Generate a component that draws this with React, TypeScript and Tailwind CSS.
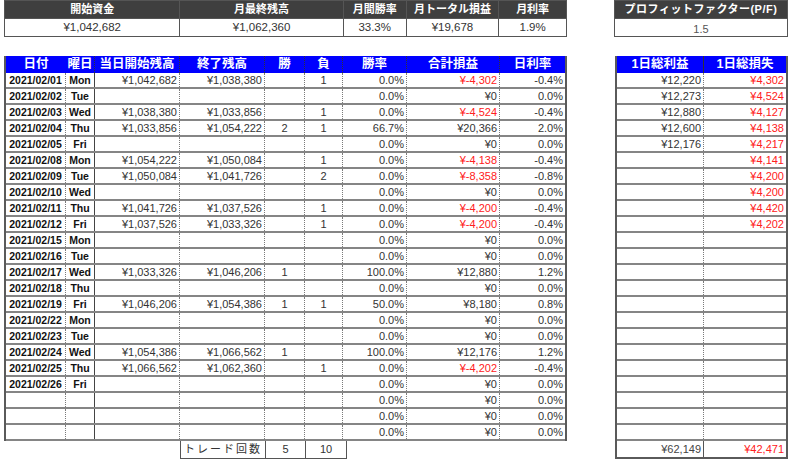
import React from "react";

type Row = {
  date?: string;
  day?: string;
  open?: string;
  close?: string;
  win?: string;
  lose?: string;
  rate: string;
  pl: string;
  neg?: boolean;
  pct: string;
};

const rows: Row[] = [
  { date: "2021/02/01", day: "Mon", open: "¥1,042,682", close: "¥1,038,380", lose: "1", rate: "0.0%", pl: "¥-4,302", neg: true, pct: "-0.4%" },
  { date: "2021/02/02", day: "Tue", rate: "0.0%", pl: "¥0", pct: "0.0%" },
  { date: "2021/02/03", day: "Wed", open: "¥1,038,380", close: "¥1,033,856", lose: "1", rate: "0.0%", pl: "¥-4,524", neg: true, pct: "-0.4%" },
  { date: "2021/02/04", day: "Thu", open: "¥1,033,856", close: "¥1,054,222", win: "2", lose: "1", rate: "66.7%", pl: "¥20,366", pct: "2.0%" },
  { date: "2021/02/05", day: "Fri", rate: "0.0%", pl: "¥0", pct: "0.0%" },
  { date: "2021/02/08", day: "Mon", open: "¥1,054,222", close: "¥1,050,084", lose: "1", rate: "0.0%", pl: "¥-4,138", neg: true, pct: "-0.4%" },
  { date: "2021/02/09", day: "Tue", open: "¥1,050,084", close: "¥1,041,726", lose: "2", rate: "0.0%", pl: "¥-8,358", neg: true, pct: "-0.8%" },
  { date: "2021/02/10", day: "Wed", rate: "0.0%", pl: "¥0", pct: "0.0%" },
  { date: "2021/02/11", day: "Thu", open: "¥1,041,726", close: "¥1,037,526", lose: "1", rate: "0.0%", pl: "¥-4,200", neg: true, pct: "-0.4%" },
  { date: "2021/02/12", day: "Fri", open: "¥1,037,526", close: "¥1,033,326", lose: "1", rate: "0.0%", pl: "¥-4,200", neg: true, pct: "-0.4%" },
  { date: "2021/02/15", day: "Mon", rate: "0.0%", pl: "¥0", pct: "0.0%" },
  { date: "2021/02/16", day: "Tue", rate: "0.0%", pl: "¥0", pct: "0.0%" },
  { date: "2021/02/17", day: "Wed", open: "¥1,033,326", close: "¥1,046,206", win: "1", rate: "100.0%", pl: "¥12,880", pct: "1.2%" },
  { date: "2021/02/18", day: "Thu", rate: "0.0%", pl: "¥0", pct: "0.0%" },
  { date: "2021/02/19", day: "Fri", open: "¥1,046,206", close: "¥1,054,386", win: "1", lose: "1", rate: "50.0%", pl: "¥8,180", pct: "0.8%" },
  { date: "2021/02/22", day: "Mon", rate: "0.0%", pl: "¥0", pct: "0.0%" },
  { date: "2021/02/23", day: "Tue", rate: "0.0%", pl: "¥0", pct: "0.0%" },
  { date: "2021/02/24", day: "Wed", open: "¥1,054,386", close: "¥1,066,562", win: "1", rate: "100.0%", pl: "¥12,176", pct: "1.2%" },
  { date: "2021/02/25", day: "Thu", open: "¥1,066,562", close: "¥1,062,360", lose: "1", rate: "0.0%", pl: "¥-4,202", neg: true, pct: "-0.4%" },
  { date: "2021/02/26", day: "Fri", rate: "0.0%", pl: "¥0", pct: "0.0%" },
  { rate: "0.0%", pl: "¥0", pct: "0.0%" },
  { rate: "0.0%", pl: "¥0", pct: "0.0%" },
  { rate: "0.0%", pl: "¥0", pct: "0.0%" },
];

const gains = ["¥12,220", "¥12,273", "¥12,880", "¥12,600", "¥12,176"];
const losses = ["¥4,302", "¥4,524", "¥4,127", "¥4,138", "¥4,217", "¥4,141", "¥4,200", "¥4,200", "¥4,420", "¥4,202"];

const dot = "border-r border-dotted border-[#7a7a7a]";
const rowLine = "flex h-[16px] border-b-2 border-[#858585] leading-[14px]";

function Summary() {
  const cols = [
    { w: "w-[176px]", h: "開始資金", v: "¥1,042,682" },
    { w: "w-[164px]", h: "月最終残高", v: "¥1,062,360" },
    { w: "w-[63px]", h: "月間勝率", v: "33.3%" },
    { w: "w-[93px]", h: "月トータル損益", v: "¥19,678" },
    { w: "w-[67px]", h: "月利率", v: "1.9%" },
  ];
  return (
    <div className="flex w-[563px] border border-[#555]">
      {cols.map((c, i) => (
        <div key={i} className={`${c.w} flex flex-col ${i < cols.length - 1 ? "border-r border-[#555]" : ""}`}>
          <div className="h-[17px] bg-[#3f3f3f] text-white font-bold text-[11px] leading-[17px] text-center">{c.h}</div>
          <div className="h-[18px] border-t border-[#555] text-[11.5px] leading-[17px] text-center text-[#333]">{c.v}</div>
        </div>
      ))}
    </div>
  );
}

function MainTable() {
  return (
    <div className="flex flex-col">
      <div className="w-[563px] border-x-2 border-[#5a5a5a]">
        <div className="flex h-[17px] bg-[#0000ff] text-white font-bold text-[12.5px] leading-[17px] text-center">
          <div className="w-[60px]">日付</div>
          <div className="w-[29px] border-r border-dotted border-[#333]">曜日</div>
          <div className="w-[85px] border-r border-dotted border-[#333]">当日開始残高</div>
          <div className="w-[85px] border-r border-dotted border-[#333]">終了残高</div>
          <div className="w-[40px] border-r border-dotted border-[#333]">勝</div>
          <div className="w-[38px] border-r border-dotted border-[#333]">負</div>
          <div className="w-[64px] border-r border-dotted border-[#333]">勝率</div>
          <div className="w-[93px] border-r border-dotted border-[#333]">合計損益</div>
          <div className="w-[65px]">日利率</div>
        </div>
        {rows.map((r, i) => (
          <div key={i} className={`${rowLine} text-[11px] text-[#333]`}>
            <div className={`w-[60px] ${dot} text-center font-bold text-[10.5px] text-[#111]`}>{r.date}</div>
            <div className="w-[29px] border-r border-[#444] text-center font-bold text-[10.5px] text-[#111]">{r.day}</div>
            <div className={`w-[85px] ${dot} text-right pr-[2px]`}>{r.open}</div>
            <div className={`w-[85px] ${dot} text-right pr-[2px]`}>{r.close}</div>
            <div className={`w-[40px] ${dot} text-center`}>{r.win}</div>
            <div className={`w-[38px] ${dot} text-center`}>{r.lose}</div>
            <div className={`w-[64px] ${dot} text-right pr-[2px]`}>{r.rate}</div>
            <div className={`w-[93px] ${dot} text-right pr-[2px] ${r.neg ? "text-[#ff2020]" : ""}`}>{r.pl}</div>
            <div className="w-[65px] text-right pr-[2px]">{r.pct}</div>
          </div>
        ))}
      </div>
      <div className="ml-[176px] flex h-[18px] w-[167px] border-x border-b border-[#555] text-[11px] leading-[17px] text-[#333] text-center">
        <div className="w-[85px] border-r border-[#555] tracking-[2px]">トレード回数</div>
        <div className="w-[40px] border-r border-[#555]">5</div>
        <div className="flex-1">10</div>
      </div>
    </div>
  );
}

function RightTable() {
  return (
    <div className="flex flex-col w-[173px]">
      <div className="border-x-2 border-[#5a5a5a]">
        <div className="flex h-[17px] bg-[#0000ff] text-white font-bold text-[12.5px] leading-[17px] text-center">
          <div className="w-[87px] border-r border-[#333]">1日総利益</div>
          <div className="flex-1">1日総損失</div>
        </div>
        {rows.map((_, i) => (
          <div key={i} className={`${rowLine} text-[11px] text-[#333]`}>
            <div className={`w-[87px] ${dot} text-right pr-[2px]`}>{gains[i]}</div>
            <div className="flex-1 text-right pr-[2px] text-[#ff2020]">{losses[i]}</div>
          </div>
        ))}
      </div>
      <div className="flex h-[18px] border-x-2 border-b-2 border-[#5a5a5a] text-[11px] leading-[16px]">
        <div className="w-[87px] border-r border-[#555] text-right pr-[2px] text-[#444]">¥62,149</div>
        <div className="flex-1 text-right pr-[2px] text-[#ff2020]">¥42,471</div>
      </div>
    </div>
  );
}

export default function App() {
  return (
    <div className="w-[800px] h-[464px] overflow-hidden bg-white font-['Liberation_Sans','Noto_Sans_CJK_JP',sans-serif]">
      <div className="flex pl-[4px]">
        <Summary />
        <div className="ml-[47px] w-[174px] border border-[#555]">
          <div className="h-[17px] bg-[#3f3f3f] text-white font-bold text-[11px] leading-[17px] text-center tracking-[0.5px]">プロフィットファクター(P/F)</div>
          <div className="h-[18px] border-t border-[#555] text-[11px] leading-[20px] text-center text-[#555]">1.5</div>
        </div>
      </div>
      <div className="flex pl-[4px] mt-[19px]">
        <MainTable />
        <div className="ml-[48px]">
          <RightTable />
        </div>
      </div>
    </div>
  );
}
